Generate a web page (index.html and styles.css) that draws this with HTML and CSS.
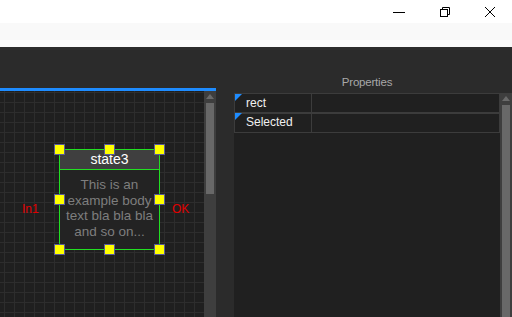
FILE: index.html
```html
<!DOCTYPE html>
<html lang="en">
<head>
  <meta charset="UTF-8" />
  <title>State Editor</title>
  <link rel="stylesheet" href="styles.css">
</head>
<body>

<div class="titlebar">
  <span class="winbtn">
    <svg width="12" height="12" viewBox="0 0 12 12"><path d="M0 6.5h12" stroke="#000" stroke-width="1"/></svg>
  </span>
  <span class="winbtn">
    <svg width="12" height="12" viewBox="0 0 12 12" fill="none" stroke="#000" stroke-width="1">
      <rect x="1.5" y="3.5" width="7" height="7"/>
      <path d="M3.5 3.5V1.5h7v7h-2"/>
    </svg>
  </span>
  <span class="winbtn">
    <svg width="12" height="12" viewBox="0 0 12 12"><path d="M1 1l10 10M11 1L1 11" stroke="#000" stroke-width="1"/></svg>
  </span>
</div>

<div class="toolbar"></div>

<div class="workspace">
  <!-- diagram view -->
  <div class="view">
    <div class="view-bar"></div>
    <div class="view-body">
      <div class="canvas">
        <span class="port port-in">In1</span>
        <div class="node">
          <div class="node-title">state3</div>
          <div class="node-body">This is an<br>example body<br>text bla bla bla<br>and so on...</div>
        </div>
        <span class="port port-out">OK</span>
        <span class="handle h-tl"></span>
        <span class="handle h-tc"></span>
        <span class="handle h-tr"></span>
        <span class="handle h-ml"></span>
        <span class="handle h-mr"></span>
        <span class="handle h-bl"></span>
        <span class="handle h-bc"></span>
        <span class="handle h-br"></span>
      </div>
      <div class="scrollbar">
        <span class="arrow"></span>
        <span class="thumb thumb-short"></span>
      </div>
    </div>
  </div>

  <!-- properties panel -->
  <div class="props">
    <div class="props-title">Properties</div>
    <div class="props-body">
      <div class="props-grid">
        <div class="prop-row">
          <div class="prop-name">rect</div>
          <div class="prop-value"></div>
        </div>
        <div class="prop-row">
          <div class="prop-name">Selected</div>
          <div class="prop-value"></div>
        </div>
      </div>
      <div class="scrollbar">
        <span class="arrow"></span>
        <span class="thumb thumb-long"></span>
      </div>
    </div>
  </div>
</div>

</body>
</html>
```

FILE: styles.css
```css
body {
  margin: 0;
  width: 512px;
  height: 317px;
  overflow: hidden;
  font-family: 'Liberation Sans', Arial, sans-serif;
  background: #2b2b2b;
}

.titlebar {
  height: 23px;
  background: #fff;
  display: flex;
  justify-content: flex-end;
}

.winbtn {
  width: 46px;
  height: 23px;
  display: flex;
  align-items: center;
  justify-content: center;
}

.winbtn:last-child { width: 44px; }

.toolbar {
  height: 24px;
  background: #f9f9f9;
}

.workspace {
  height: 270px;
  display: flex;
  gap: 18px;
}

/* diagram view */
.view {
  width: 216px;
  padding-top: 41px;
  display: flex;
  flex-direction: column;
}

.view-bar {
  height: 3px;
  background: #1e8cff;
}

.view-body {
  flex: 1;
  display: flex;
}

.canvas {
  position: relative;
  flex: 1;
  background-color: #1f1f1f;
  background-image:
    linear-gradient(to right, #2d2d2d 1px, transparent 1px),
    linear-gradient(to bottom, #2d2d2d 1px, transparent 1px);
  background-size: 10px 10px;
  background-position: 4px 1px;
}

.scrollbar {
  width: 12px;
  background: #3e3e3e;
  display: flex;
  flex-direction: column;
  align-items: center;
}

.arrow {
  margin-top: 3px;
  width: 0;
  height: 0;
  border-left: 4px solid transparent;
  border-right: 4px solid transparent;
  border-bottom: 5px solid #6a6a6a;
}

.thumb {
  margin-top: 4px;
  width: 8px;
  background: #686868;
}

.thumb-short { height: 91px; }
.thumb-long  { flex: 1; }

.node {
  position: absolute;
  left: 59px;
  top: 58px;
  width: 99px;
  height: 99px;
  border: 1px solid #22e022;
  border-radius: 7px;
  overflow: hidden;
  background: #232323;
}

.node-title {
  height: 19px;
  background: #3f3f3f;
  border-bottom: 1px solid #22e022;
  color: #fff;
  font-size: 14px;
  line-height: 19px;
  text-align: center;
}

.node-body {
  padding-top: 7px;
  color: #7e7e7e;
  font-size: 13.5px;
  line-height: 15.5px;
  text-align: center;
  white-space: nowrap;
}

.port {
  position: absolute;
  top: 111px;
  color: #e00000;
  font-size: 12px;
}

.port-in  { left: 22px; }
.port-out { left: 172px; }

.handle {
  position: absolute;
  width: 9px;
  height: 9px;
  background: #ffff00;
  border: 1px solid #5a5a9a;
}

.h-tl { left: 54px;  top: 53px; }
.h-tc { left: 104px; top: 53px; }
.h-tr { left: 154px; top: 53px; }
.h-ml { left: 54px;  top: 103px; }
.h-mr { left: 154px; top: 103px; }
.h-bl { left: 54px;  top: 153px; }
.h-bc { left: 104px; top: 153px; }
.h-br { left: 154px; top: 153px; }

/* properties panel */
.props {
  flex: 1;
  display: flex;
  flex-direction: column;
  padding-top: 29px;
}

.props-title {
  height: 17px;
  color: #a8a8a8;
  font-size: 11.5px;
  text-align: center;
  padding-right: 12px;
  letter-spacing: -0.2px;
}

.props-body {
  flex: 1;
  display: flex;
}

.props-grid {
  flex: 1;
  background: #202020;
}

.prop-row {
  display: flex;
  height: 18px;
  border: 1px solid #3c3c3c;
}

.prop-row + .prop-row {
  border-top: none;
  box-shadow: inset 0 1px 0 #3c3c3c;
  height: 19px;
}

.prop-name {
  position: relative;
  width: 65px;
  padding-left: 11px;
  border-right: 1px solid #3c3c3c;
  color: #f0f0f0;
  font-size: 12px;
  line-height: 19px;
}

.prop-name::before {
  content: "";
  position: absolute;
  left: 0;
  top: 0;
  border-top: 7px solid #1e8cff;
  border-right: 7px solid transparent;
}

.prop-value {
  flex: 1;
}
```
